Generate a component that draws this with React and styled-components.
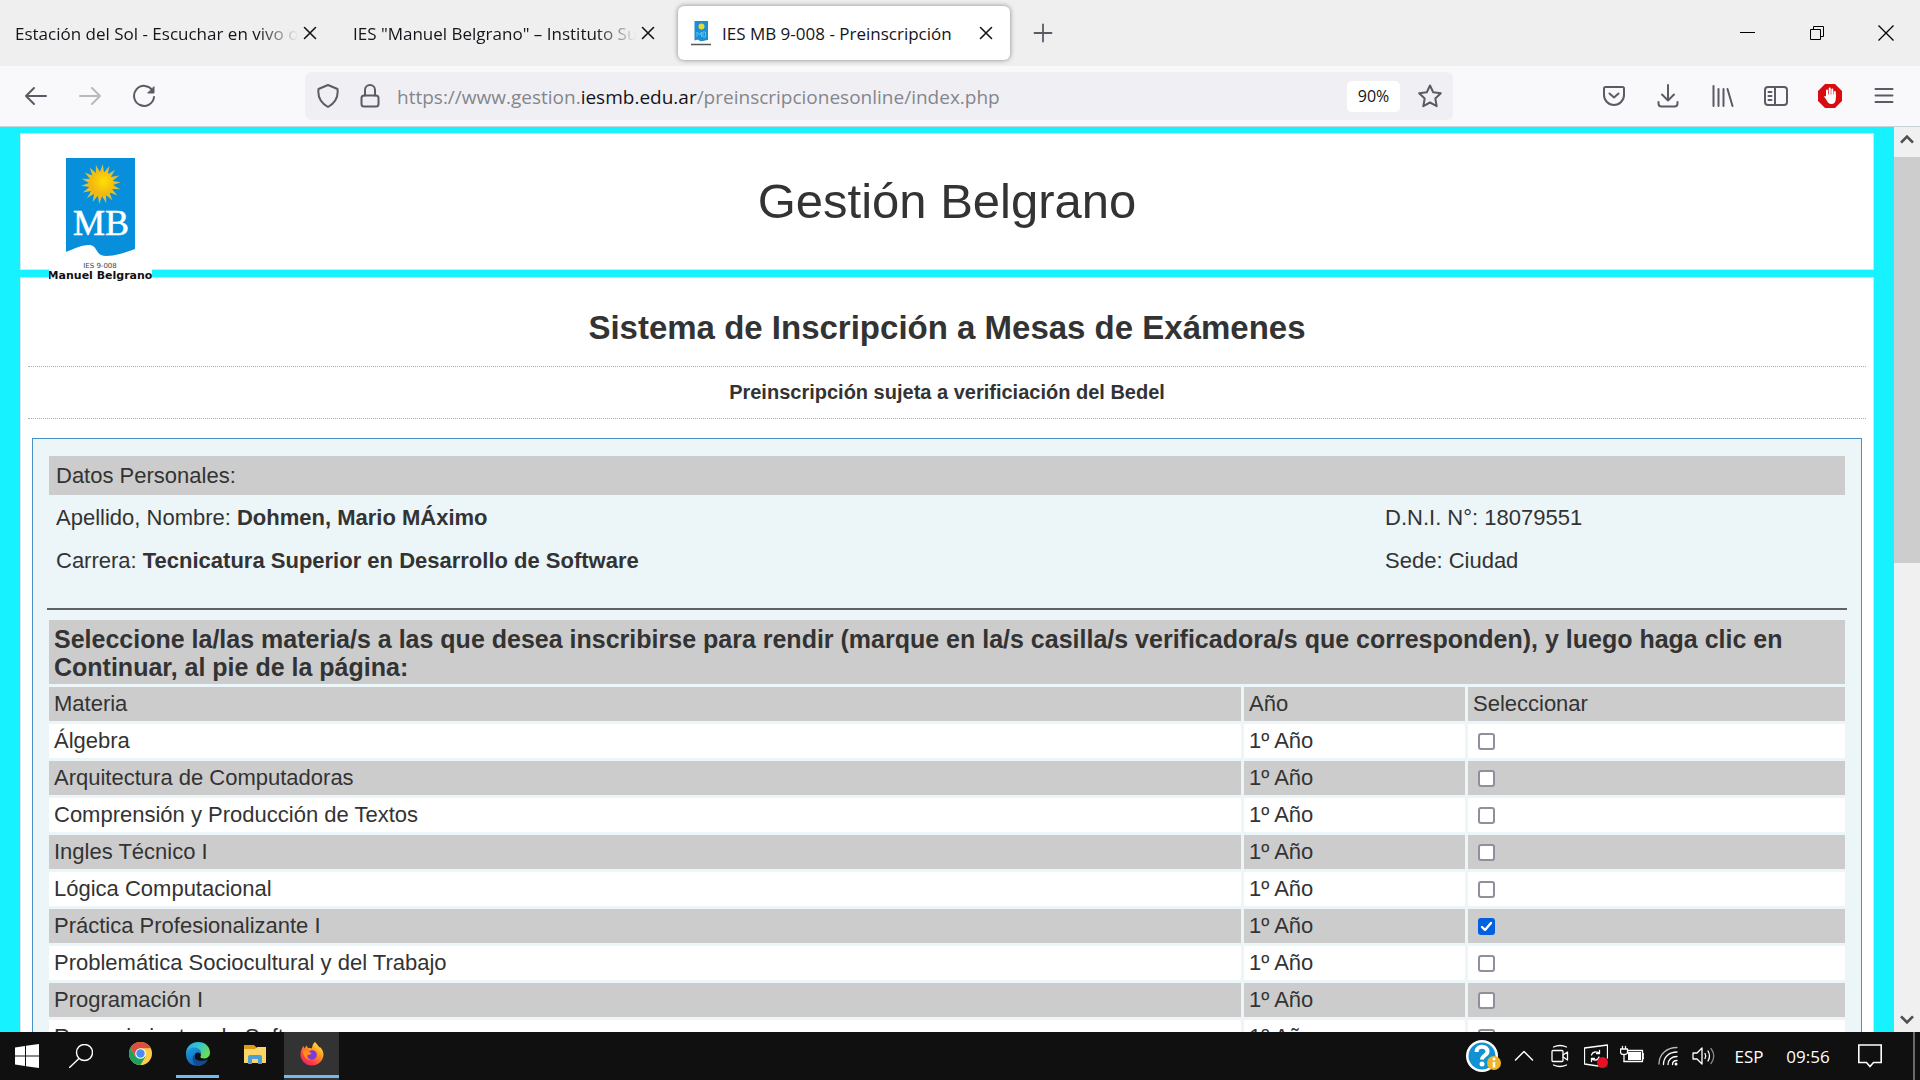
import React, { useState } from "react";
import styled, { createGlobalStyle } from "styled-components";

const uiFont = `"Open Sans", "Noto Sans", sans-serif`;
const pageFont = `"Liberation Sans", Arial, sans-serif`;

const GlobalStyle = createGlobalStyle`
  *, *::before, *::after { box-sizing: border-box; }
  html, body { margin: 0; padding: 0; }
  body { overflow: hidden; font-family: ${pageFont}; color: #333; }
  button { font: inherit; color: inherit; background: none; border: 0; padding: 0; margin: 0; }
  h1, h2, h3, p { margin: 0; }
  svg { display: block; }
`;

const Screen = styled.div`
  display: flex;
  flex-direction: column;
  height: 100vh;
`;

/* ---------- browser chrome ---------- */

const TabStrip = styled.header`
  display: flex;
  align-items: center;
  gap: 6px;
  height: 66px;
  flex: none;
  padding-left: 2px;
  background: #efefef;
  font-family: ${uiFont};
  font-size: 17px;
  color: #15141a;
`;

const Tab = styled.div`
  display: flex;
  align-items: center;
  width: 332px;
  height: 54px;
  padding: 0 12px 0 13px;
  border-radius: 6px;
  background: ${(p) => (p.$active ? "#fff" : "transparent")};
  box-shadow: ${(p) => (p.$active ? "0 0 5px rgba(0, 0, 0, 0.45)" : "none")};
`;

const TabTitle = styled.span`
  flex: 1;
  min-width: 0;
  overflow: hidden;
  white-space: nowrap;
  padding-left: ${(p) => (p.$withIcon ? "11px" : "0")};
  mask-image: ${(p) => (p.$fade ? "linear-gradient(to left, transparent, #000 40px)" : "none")};
`;

const TabButton = styled.button`
  display: grid;
  place-items: center;
  width: ${(p) => (p.$wide ? "54px" : "24px")};
  height: 40px;
`;

const WindowControls = styled.div`
  display: flex;
  align-self: stretch;
  margin-left: auto;
`;

const WindowButton = styled.button`
  display: grid;
  place-items: center;
  width: 69px;
  color: #000;
`;

const NavBar = styled.nav`
  display: flex;
  align-items: center;
  flex: none;
  height: 61px;
  padding: 0 9px;
  background: #f9f9fb;
  border-bottom: 1px solid #c4d4d8;
  color: #5b5b66;
`;

const NavButton = styled.button`
  display: grid;
  place-items: center;
  width: 54px;
  height: 48px;
  flex: none;
  opacity: ${(p) => (p.disabled ? 0.4 : 1)};
`;

const Spacer = styled.div`
  flex: 0 1 134px;
`;

const UrlBar = styled.div`
  display: flex;
  align-items: center;
  flex: 1;
  min-width: 0;
  height: 48px;
  padding: 0 2px;
  border-radius: 6px;
  background: #f0f0f4;
  font-family: ${uiFont};
`;

const UrlButton = styled.button`
  display: grid;
  place-items: center;
  width: 42px;
  height: 40px;
  flex: none;
`;

const UrlText = styled.div`
  flex: 1;
  min-width: 0;
  padding: 2px 0 0 6px;
  overflow: hidden;
  white-space: nowrap;
  font-size: 19px;
  color: #85858c;

  b {
    font-weight: 400;
    color: #15141a;
  }
`;

const ZoomBadge = styled.button`
  width: 53px;
  height: 31px;
  margin-right: 9px;
  border-radius: 5px;
  background: #fff;
  color: #15141a;
  font-size: 16px;
`;

/* ---------- viewport ---------- */

const Viewport = styled.div`
  display: grid;
  grid-template-columns: 1fr 26px;
  flex: 1;
  min-height: 0;
`;

const ScrollBar = styled.div`
  display: flex;
  flex-direction: column;
  background: #f0f0f0;
  color: #505050;
`;

const ScrollButton = styled.button`
  display: grid;
  place-items: center;
  height: 26px;
  flex: none;
`;

const ScrollTrack = styled.div`
  flex: 1;
  padding: 4px 0;
`;

const ScrollThumb = styled.div`
  height: 48%;
  background: #cdcdcd;
`;

const Page = styled.main`
  overflow: hidden;
  padding: 6px 20px 0;
  background: #16f2ff;
`;

const PageHeader = styled.header`
  display: grid;
  grid-template-columns: 103px 1fr 103px;
  height: 137px;
  padding: 23px 28px 0;
  border: 1px solid #d4e6ea;
  background: #fff;
`;

const LogoBox = styled.div`
  position: relative;
  z-index: 1;
  height: 125px;
  background: #fff;
`;

const SiteTitle = styled.h1`
  padding-top: 14px;
  text-align: center;
  font-size: 49px;
  font-weight: 400;
  line-height: 60px;
`;

const PageBody = styled.section`
  margin-top: 7px;
  padding: 0 7px 40px;
  border: 1px solid #d4e6ea;
  background: #fff;
`;

const SystemTitle = styled.h2`
  padding: 30px 0 18px;
  border-bottom: 1px dotted #aaa;
  text-align: center;
  font-size: 33px;
  line-height: 40px;
`;

const Notice = styled.h3`
  padding: 10px 0 11px;
  border-bottom: 1px dotted #aaa;
  text-align: center;
  font-size: 20px;
  line-height: 30px;
`;

const Panel = styled.div`
  margin: 19px 4px 0;
  padding: 17px 13px;
  border: 1px solid #4a90c4;
  background: #ecf5f8;
  font-size: 22px;
`;

const PanelTitle = styled.div`
  margin: 0 3px;
  padding: 0 7px;
  background: #ccc;
  line-height: 39px;
`;

const PersonalData = styled.div`
  display: grid;
  grid-template-columns: 74% 1fr;
  margin: 1px 3px 0;
`;

const Datum = styled.p`
  padding: 0 7px;
  line-height: 43px;
`;

const Divider = styled.hr`
  height: 2px;
  margin: 26px 1px 7px;
  border: 0;
  background: #5f6364;
`;

const CourseTable = styled.table`
  width: 100%;
  table-layout: fixed;
  border-collapse: separate;
  border-spacing: 3px;
`;

const YearCol = styled.col`
  width: 221px;
`;

const SelectCol = styled.col`
  width: 377px;
`;

const Instructions = styled.th`
  height: 64px;
  padding: 5px 5px 3px;
  background: #ccc;
  text-align: left;
  font-size: 25px;
  line-height: 28px;
`;

const ColumnHead = styled.th`
  height: 34px;
  padding: 0 5px;
  background: #ccc;
  text-align: left;
  font-weight: 400;
`;

const Cell = styled.td`
  height: 34px;
  padding: 0 5px;
  background: ${(p) => (p.$shaded ? "#ccc" : "#fff")};
`;

const CheckBox = styled.input`
  appearance: none;
  display: block;
  width: 17px;
  height: 17px;
  margin: 0 0 0 5px;
  border: 2px solid #8f8f9d;
  border-radius: 3px;
  background: #fff;

  &:checked {
    border-color: #0060df;
    background: #0060df;
  }
`;

const CheckWrap = styled.span`
  display: grid;
  width: 22px;

  > * {
    grid-area: 1 / 1;
  }

  svg {
    margin-left: 5px;
    pointer-events: none;
  }
`;

/* ---------- taskbar ---------- */

const TaskBar = styled.footer`
  display: flex;
  align-items: stretch;
  flex: none;
  height: 48px;
  background: #101010;
  color: #fff;
  font-family: ${uiFont};
  font-size: 17px;
`;

const SystemButton = styled.button`
  display: grid;
  place-items: center;
  width: 54px;
`;

const AppList = styled.div`
  display: flex;
  gap: 2px;
  margin-left: 5px;
`;

const AppButton = styled.button`
  display: grid;
  grid-template-rows: 1fr 3px;
  justify-items: center;
  align-items: center;
  width: 55px;
  padding: 0 0 2px;
  background: ${(p) => (p.$active ? "#333" : "transparent")};

  &::after {
    content: "";
    width: ${(p) => (p.$active ? "55px" : "43px")};
    height: 3px;
    background: ${(p) => (p.$open ? "#76b9ed" : "transparent")};
  }
`;

const Tray = styled.div`
  display: flex;
  margin-left: auto;
`;

const TrayButton = styled.button`
  display: grid;
  place-items: center;
  width: ${(p) => p.$w || 36}px;
`;

const DesktopEdge = styled.button`
  width: 7px;
  margin-left: 13px;
  border-left: 2px solid #6a6a6a;
`;

/* ---------- drawings ---------- */

const Line = ({ size = 24, width = 2, children, ...rest }) => (
  <svg width={size} height={size} viewBox="0 0 24 24" fill="none" stroke="currentColor"
    strokeWidth={width} strokeLinecap="round" strokeLinejoin="round" aria-hidden="true" {...rest}>
    {children}
  </svg>
);

const CloseIcon = () => (
  <Line width={1.6}><path d="M6.500 6.500 17.500 17.500M17.500 6.500 6.500 17.500" /></Line>
);

const sunRays = Array.from({ length: 36 }, (_, i) => {
  const r = i % 2 ? 12 : 20;
  const a = ((i + 0.5) * Math.PI) / 18;
  return `${(52 + r * Math.sin(a)).toFixed(2)},${(27 - r * Math.cos(a)).toFixed(2)}`;
}).join(" ");

const Logo = () => (
  <svg width="103" height="125" viewBox="0 0 103 125" role="img" aria-label="IES 9-008 Manuel Belgrano">
    <defs>
      <radialGradient id="sun">
        <stop offset="0" stopColor="#ffdf00" />
        <stop offset="0.6" stopColor="#efc21a" />
        <stop offset="1" stopColor="#b5bd70" />
      </radialGradient>
      <radialGradient id="sunCore" cx="0.6" cy="0.4">
        <stop offset="0" stopColor="#ffe000" />
        <stop offset="1" stopColor="#f2b714" />
      </radialGradient>
    </defs>
    <path d="M17 1H86V92C75 96 66 99 57 99C46 99 49 88 40 88C31 88 25 92 17 95Z" fill="#078fdc" />
    <polygon points={sunRays} fill="url(#sun)" />
    <circle cx="52" cy="27" r="12.500" fill="url(#sunCore)" />
    <text x="52" y="78" textAnchor="middle" fontFamily="'Liberation Serif', serif" fontSize="36"
      fill="#fff" stroke="#fff" strokeWidth="0.500">MB</text>
    <text x="51" y="111" textAnchor="middle" fontFamily="'DejaVu Sans', sans-serif" fontSize="7" fill="#444">IES 9-008</text>
    <text x="51" y="122" textAnchor="middle" fontFamily="'DejaVu Sans', sans-serif" fontWeight="700" fontSize="11" fill="#111">Manuel Belgrano</text>
  </svg>
);

const Favicon = () => (
  <svg width="20" height="26" viewBox="0 0 20 26" aria-hidden="true">
    <path d="M3.500 1H17V20C13 20 12 22 9 21C7 19 6 20 3.500 20.500Z" fill="#1b8fcf" />
    <circle cx="10.500" cy="6.500" r="3" fill="#e8d83a" />
    <path d="M6 17V12L8.500 15 10.500 12V17M12 12V17H14.500V12Z" fill="none" stroke="#63bdf0" />
    <path d="M0 24.500H20" stroke="#555" strokeWidth="1.500" />
  </svg>
);

const WindowsIcon = () => (
  <svg width="24" height="24" viewBox="0 0 24 24" fill="#fff" aria-hidden="true">
    <path d="M0 3.400 10 2V11.400H0ZM11 1.800 24 0V11.400H11ZM0 12.600H10V22L0 20.600ZM11 12.600H24V24L11 22.200Z" />
  </svg>
);

const ChromeIcon = () => (
  <svg width="23" height="23" viewBox="0 0 48 48" aria-hidden="true">
    <circle cx="24" cy="24" r="24" fill="#ffcd46" />
    <path d="M3.200 12A24 24 0 0 0 24 48L34.400 30 24 24 13.600 30Z" fill="#1fa05c" />
    <path d="M3.200 12A24 24 0 0 1 44.800 12V13H24L13.600 30Z" fill="#d9503f" />
    <circle cx="24" cy="24" r="11" fill="#fff" />
    <circle cx="24" cy="24" r="8.800" fill="#4c8bf5" />
  </svg>
);

const EdgeIcon = () => (
  <svg width="24" height="24" viewBox="0 0 24 24" aria-hidden="true">
    <defs>
      <linearGradient id="edgeTop" x1="0" y1="0" x2="1" y2="0.600">
        <stop offset="0" stopColor="#2ba5e0" />
        <stop offset="0.500" stopColor="#36c5d0" />
        <stop offset="1" stopColor="#6be04a" />
      </linearGradient>
      <linearGradient id="edgeBody" x1="0" y1="0" x2="0.500" y2="1">
        <stop offset="0" stopColor="#1ba0e0" />
        <stop offset="1" stopColor="#1060b8" />
      </linearGradient>
    </defs>
    <path d="M0 12C0 4 6 0 12 0C19.500 0 24 5 24 10.500C24 14.500 21 16.500 18 16.500C15.500 16.500 14 15.500 14.500 14.500C15.500 13 15 8 9 8C4 8 0 11 0 12Z" fill="url(#edgeTop)" />
    <path d="M0 12C0 8 4 5.500 8 5.500C13 5.500 16 9 15 12.500C13 9.500 9 10 8.500 14C8 19 13 22 18 21.500C12 26 0 24 0 12Z" fill="url(#edgeBody)" />
    <path d="M8.500 12.500C7.500 17 12 21 22 17.500C21 20 17 24 12 24C6 22 5.500 15 8.500 12.500Z" fill="#134a94" />
  </svg>
);

const ExplorerIcon = () => (
  <svg width="24" height="24" viewBox="0 0 24 24" aria-hidden="true">
    <path d="M1 3H11L13 5V8H1Z" fill="#d89c16" />
    <path d="M1 7H12L14 5H23V21H1Z" fill="#fbd667" />
    <path d="M5 22V15Q5 13 7 13H17Q19 13 19 15V22H15V17H9V22Z" fill="#4a9fd8" />
  </svg>
);

const FirefoxIcon = () => (
  <svg width="24" height="24" viewBox="0 0 24 24" aria-hidden="true">
    <defs>
      <linearGradient id="fox" x1="0.900" y1="0" x2="0.200" y2="1">
        <stop offset="0" stopColor="#fff04a" />
        <stop offset="0.400" stopColor="#ff9a20" />
        <stop offset="0.750" stopColor="#ff4040" />
        <stop offset="1" stopColor="#e0207c" />
      </linearGradient>
    </defs>
    <path d="M15 0C17 2 18 3.500 19 5L20.500 5.500C23 8 23.500 11 23.500 13C23 19 18 23.500 12 23.500C5.500 23.500 .5 18.500 .5 12.500C.5 9 2 6 3.500 4L4.500 6.500L6.500 3.500C7 4.800 7.500 5.500 8.500 6C10 6 11 6 12 6.500C12 4 13 1.500 15 0Z" fill="url(#fox)" />
    <path d="M9 10C10 8 14 7.500 16 10C18 13 16 17.500 12 17.500C9 17.500 7 15 7.500 13C9 13 10.500 12.500 11.500 11.500Z" fill="#7a3bd8" />
    <path d="M3 9C6 7 8 9 11.500 11.500C9 12 9 13 7.500 13C6.500 15 8 17 11 18C5 18 3 13 3 9Z" fill="#ff8f1c" />
  </svg>
);

const BlockIcon = () => (
  <svg width="24" height="24" viewBox="0 0 24 24" aria-hidden="true">
    <path d="M7 0H17L24 7V17L17 24H7L0 17V7Z" fill="#d80d12" />
    <path d="M9 13V6.500M11.700 12V4.500M14.300 12V5.500M16.800 13V8" stroke="#fff" strokeWidth="2" strokeLinecap="round" />
    <path d="M8 10.500H17.800V15C17.800 18 16 20 13.500 20C10.500 20 9.500 18 8.500 16L6 12.500Q7 11.500 8.500 13Z" fill="#fff" />
  </svg>
);

const HelpIcon = () => (
  <svg width="38" height="36" viewBox="0 0 38 36" aria-hidden="true">
    <circle cx="17" cy="18" r="16" fill="#fff" />
    <circle cx="17" cy="18" r="13.500" fill="#1292d4" />
    <path d="M11.500 14C11.500 7 22.500 7 22.500 13.500C22.500 17.500 17 17.500 17 21.500" fill="none" stroke="#fff" strokeWidth="4" />
    <circle cx="17" cy="26" r="2.500" fill="#fff" />
    <circle cx="29" cy="25" r="7" fill="#f0b429" />
    <path d="M29 24V29.500" stroke="#fff" strokeWidth="2.500" />
    <circle cx="29" cy="21" r="1.500" fill="#fff" />
  </svg>
);

const courses = [
  "Álgebra",
  "Arquitectura de Computadoras",
  "Comprensión y Producción de Textos",
  "Ingles Técnico I",
  "Lógica Computacional",
  "Práctica Profesionalizante I",
  "Problemática Sociocultural y del Trabajo",
  "Programación I",
  "Requerimientos de Software",
];

function CourseRow({ name, index, checked, onToggle }) {
  const shaded = index % 2 === 1;
  const id = `materia-${index}`;
  return (
    <tr>
      <Cell $shaded={shaded}><label htmlFor={id}>{name}</label></Cell>
      <Cell $shaded={shaded}>1º Año</Cell>
      <Cell $shaded={shaded}>
        <CheckWrap>
          <CheckBox type="checkbox" id={id} checked={checked} onChange={onToggle} />
          {checked && (
            <svg width="17" height="17" viewBox="0 0 17 17" fill="none" stroke="#fff" strokeWidth="2.400"
              strokeLinecap="round" strokeLinejoin="round" aria-hidden="true">
              <path d="M4 9 7 12 13 5" />
            </svg>
          )}
        </CheckWrap>
      </Cell>
    </tr>
  );
}

export default function App() {
  const [selected, setSelected] = useState([5]);
  const toggle = (i) =>
    setSelected((s) => (s.includes(i) ? s.filter((n) => n !== i) : [...s, i]));

  return (
    <Screen>
      <GlobalStyle />
      <TabStrip>
        <Tab>
          <TabTitle $fade>Estación del Sol - Escuchar en vivo online</TabTitle>
          <TabButton aria-label="Cerrar pestaña"><CloseIcon /></TabButton>
        </Tab>
        <Tab>
          <TabTitle $fade>IES "Manuel Belgrano" – Instituto Superior</TabTitle>
          <TabButton aria-label="Cerrar pestaña"><CloseIcon /></TabButton>
        </Tab>
        <Tab $active>
          <Favicon />
          <TabTitle $withIcon>IES MB 9-008 - Preinscripción</TabTitle>
          <TabButton aria-label="Cerrar pestaña"><CloseIcon /></TabButton>
        </Tab>
        <TabButton $wide aria-label="Nueva pestaña">
          <Line width={1.8} stroke="#5b5b66"><path d="M12 3.500V20.500M3.500 12H20.500" /></Line>
        </TabButton>
        <WindowControls>
          <WindowButton aria-label="Minimizar">
            <svg width="16" height="16" aria-hidden="true"><path d="M0 7.500H15" stroke="#000" /></svg>
          </WindowButton>
          <WindowButton aria-label="Restaurar">
            <svg width="16" height="16" fill="none" stroke="#000" aria-hidden="true">
              <path d="M1.500 4.500H11.500V14.500H1.500ZM4.500 4.500V1.500H14.500V11.500H11.500" />
            </svg>
          </WindowButton>
          <WindowButton aria-label="Cerrar">
            <svg width="16" height="16" stroke="#000" strokeWidth="1.300" aria-hidden="true">
              <path d="M0.500 0.500 15.500 15.500M15.500 0.500 0.500 15.500" />
            </svg>
          </WindowButton>
        </WindowControls>
      </TabStrip>

      <NavBar>
        <NavButton aria-label="Atrás"><Line><path d="M22 12H2M10 4 2 12 10 20" /></Line></NavButton>
        <NavButton aria-label="Adelante" disabled><Line><path d="M2 12H22M14 4 22 12 14 20" /></Line></NavButton>
        <NavButton aria-label="Recargar">
          <Line>
            <path d="M20.500 6.500A10 10 0 1 0 22 13" />
            <path d="M22 3V9H16Z" fill="currentColor" strokeWidth="1" />
          </Line>
        </NavButton>
        <Spacer />
        <UrlBar>
          <UrlButton aria-label="Protección">
            <Line><path d="M12 1 21.500 5C22.500 13 19 19 12 23C5 19 1.500 13 2.500 5Z" /></Line>
          </UrlButton>
          <UrlButton aria-label="Conexión segura">
            <Line>
              <rect x="3.500" y="11.500" width="17" height="11" rx="2.500" />
              <path d="M7 11.500V6A5 5 0 0 1 17 6V11.500" />
            </Line>
          </UrlButton>
          <UrlText>https://www.gestion.<b>iesmb.edu.ar</b>/preinscripcionesonline/index.php</UrlText>
          <ZoomBadge>90%</ZoomBadge>
          <UrlButton aria-label="Marcador">
            <Line><path d="M12 1.500 15.200 8.200 22.800 9.200 17.300 14.500 18.700 22.200 12 18.500 5.300 22.200 6.700 14.500 1.200 9.200 8.800 8.200Z" /></Line>
          </UrlButton>
        </UrlBar>
        <Spacer />
        <NavButton aria-label="Pocket">
          <Line>
            <path d="M3.500 3H20.500Q22 3 22 4.500V11A10 10 0 0 1 2 11V4.500Q2 3 3.500 3Z" />
            <path d="M7.500 9.500 12 13.500 16.500 9.500" />
          </Line>
        </NavButton>
        <NavButton aria-label="Descargas">
          <Line><path d="M12 1V16M6 10.500 12 16.500 18 10.500M2.500 18V19.500Q2.500 22.500 5.500 22.500H18.500Q21.500 22.500 21.500 19.500V18" /></Line>
        </NavButton>
        <NavButton aria-label="Biblioteca">
          <Line><path d="M3.500 2V22M8.500 5V22M13.500 5V22M17.500 5 22.500 22" /></Line>
        </NavButton>
        <NavButton aria-label="Barra lateral">
          <Line>
            <rect x="1" y="3" width="22" height="18" rx="3" />
            <path d="M11 3V21M4.500 8H7.500M4.500 12H7.500M4.500 16H7.500" />
          </Line>
        </NavButton>
        <NavButton aria-label="Bloqueador"><BlockIcon /></NavButton>
        <NavButton aria-label="Menú"><Line><path d="M3.500 5H20.500M3.500 11.500H20.500M3.500 18H20.500" /></Line></NavButton>
      </NavBar>

      <Viewport>
        <Page>
          <PageHeader>
            <LogoBox><Logo /></LogoBox>
            <SiteTitle>Gestión Belgrano</SiteTitle>
          </PageHeader>
          <PageBody>
            <SystemTitle>Sistema de Inscripción a Mesas de Exámenes</SystemTitle>
            <Notice>Preinscripción sujeta a verificiación del Bedel</Notice>
            <Panel>
              <PanelTitle>Datos Personales:</PanelTitle>
              <PersonalData>
                <Datum>Apellido, Nombre: <b>Dohmen, Mario MÁximo</b></Datum>
                <Datum>D.N.I. N°: 18079551</Datum>
                <Datum>Carrera: <b>Tecnicatura Superior en Desarrollo de Software</b></Datum>
                <Datum>Sede: Ciudad</Datum>
              </PersonalData>
              <Divider />
              <CourseTable>
                <colgroup>
                  <col />
                  <YearCol />
                  <SelectCol />
                </colgroup>
                <thead>
                  <tr>
                    <Instructions colSpan={3}>
                      Seleccione la/las materia/s a las que desea inscribirse para rendir (marque en la/s casilla/s
                      verificadora/s que corresponden), y luego haga clic en Continuar, al pie de la página:
                    </Instructions>
                  </tr>
                  <tr>
                    <ColumnHead>Materia</ColumnHead>
                    <ColumnHead>Año</ColumnHead>
                    <ColumnHead>Seleccionar</ColumnHead>
                  </tr>
                </thead>
                <tbody>
                  {courses.map((name, i) => (
                    <CourseRow key={name} name={name} index={i} checked={selected.includes(i)} onToggle={() => toggle(i)} />
                  ))}
                </tbody>
              </CourseTable>
            </Panel>
          </PageBody>
        </Page>
        <ScrollBar>
          <ScrollButton aria-label="Subir"><Line size={16} width={4} strokeLinecap="butt" strokeLinejoin="miter"><path d="M3 16 12 7 21 16" /></Line></ScrollButton>
          <ScrollTrack><ScrollThumb /></ScrollTrack>
          <ScrollButton aria-label="Bajar"><Line size={16} width={4} strokeLinecap="butt" strokeLinejoin="miter"><path d="M3 8 12 17 21 8" /></Line></ScrollButton>
        </ScrollBar>
      </Viewport>

      <TaskBar>
        <SystemButton aria-label="Inicio"><WindowsIcon /></SystemButton>
        <SystemButton aria-label="Buscar">
          <Line width={1.4}><circle cx="15.500" cy="8.500" r="8" /><path d="M10 14.500 0.500 23.500" /></Line>
        </SystemButton>
        <AppList>
          <AppButton aria-label="Chrome"><ChromeIcon /></AppButton>
          <AppButton $open aria-label="Edge"><EdgeIcon /></AppButton>
          <AppButton aria-label="Explorador"><ExplorerIcon /></AppButton>
          <AppButton $open $active aria-label="Firefox"><FirefoxIcon /></AppButton>
        </AppList>
        <Tray>
          <TrayButton $w={44} aria-label="Ayuda"><HelpIcon /></TrayButton>
          <TrayButton aria-label="Mostrar iconos ocultos"><Line width={1.500} size={24}><path d="M3.500 16 12 7.500 20.500 16" /></Line></TrayButton>
          <TrayButton aria-label="Cámara">
            <Line width={1.300}>
              <rect x="4" y="6.500" width="11" height="11" rx="1" />
              <path d="M15 11 19.500 8V16L15 13M5.500 3Q12 0 18.500 3M5.500 21Q12 24 18.500 21" />
            </Line>
          </TrayButton>
          <TrayButton aria-label="Actualizaciones">
            <Line width={1.300}>
              <path d="M14 22 0.500 20V4L23.500 1V14" />
              <path d="M7.500 11C8.500 7.500 13 7 15.500 9.500M15.500 6.500V9.500H12.500M15 13C14 16.500 10 17 7.500 14.500M7.500 17.500V14.500H10.500" />
              <circle cx="18.500" cy="18.500" r="5.500" fill="#e81123" stroke="none" />
            </Line>
          </TrayButton>
          <TrayButton aria-label="Batería">
            <Line width={1.300}>
              <path d="M8 6.500H22.500V17.500H4M22.500 10H24V14.500H22.500" />
              <rect x="8" y="8" width="13" height="8" fill="#fff" stroke="none" />
              <path d="M0.500 5H7.500V8Q7.500 10.500 4 10.500Q0.500 10.500 0.500 8ZM2.500 5V2.500M5.500 5V2.500M4 10.500V17.500" fill="#101010" />
            </Line>
          </TrayButton>
          <TrayButton aria-label="Wi-Fi">
            <Line width={1.300}>
              <path d="M3 20C3 10 11 3.500 21 3.500" opacity="0.700" />
              <path d="M7.500 20.500C7.500 13 13 8 21 8M12 20.500C12 16 15.500 12.500 21 12.500M16.500 20.500Q16.500 16.500 21 16.500" />
              <circle cx="20" cy="20" r="1.500" fill="#fff" stroke="none" />
            </Line>
          </TrayButton>
          <TrayButton aria-label="Volumen">
            <Line width={1.300}>
              <path d="M1 9H5L10 4V20L5 15H1ZM13 9.500Q14.500 12 13 14.500M16 7Q19 12 16 17" />
              <path d="M19 4.500Q24.500 12 19 19.500" opacity="0.500" />
            </Line>
          </TrayButton>
          <TrayButton $w={54}>ESP</TrayButton>
          <TrayButton $w={64}>09:56</TrayButton>
          <TrayButton $w={60} aria-label="Notificaciones">
            <Line width={1.600} strokeLinejoin="miter"><path d="M0.800 1H23.200V18.500H15.500L12 22.500L8.500 18.500H0.800Z" /></Line>
          </TrayButton>
          <DesktopEdge aria-label="Mostrar escritorio" />
        </Tray>
      </TaskBar>
    </Screen>
  );
}
